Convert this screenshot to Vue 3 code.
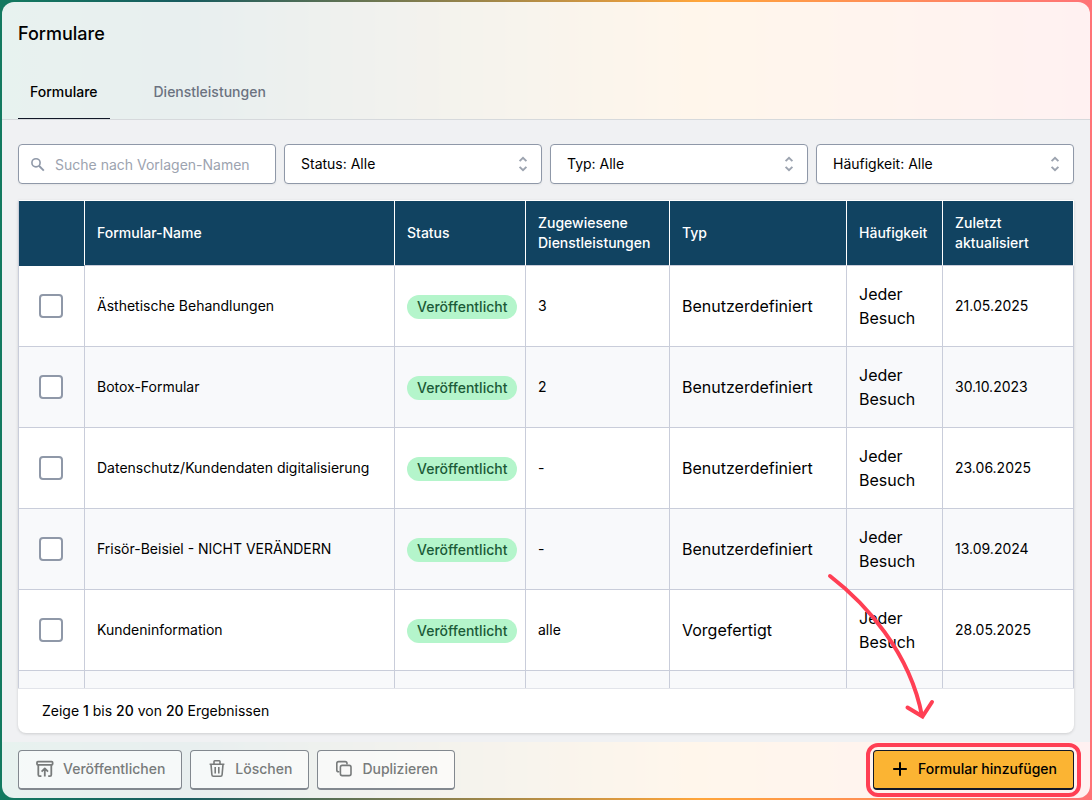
<script setup>
import { ref } from 'vue'

const search = ref('')
const filters = [
  { id: 'status', label: 'Status', text: 'Status: Alle' },
  { id: 'type', label: 'Typ', text: 'Typ: Alle' },
  { id: 'frequency', label: 'Häufigkeit', text: 'Häufigkeit: Alle' }
]
const rows = ref([
  { name: 'Ästhetische Behandlungen', services: '3', type: 'Benutzerdefiniert', updated: '21.05.2025', checked: false },
  { name: 'Botox-Formular', services: '2', type: 'Benutzerdefiniert', updated: '30.10.2023', checked: false },
  { name: 'Datenschutz/Kundendaten digitalisierung', services: '-', type: 'Benutzerdefiniert', updated: '23.06.2025', checked: false },
  { name: 'Frisör-Beisiel - NICHT VERÄNDERN', services: '-', type: 'Benutzerdefiniert', updated: '13.09.2024', checked: false },
  { name: 'Kundeninformation', services: 'alle', type: 'Vorgefertigt', updated: '28.05.2025', checked: false }
])
</script>

<template>
  <div class="shell">
    <main class="panel">
      <header class="head">
        <h1>Formulare</h1>
        <nav class="tabs">
          <a href="#formulare" class="tab active">Formulare</a>
          <a href="#dienstleistungen" class="tab">Dienstleistungen</a>
        </nav>
      </header>

      <section class="content">
        <div class="filters">
          <label class="field">
            <svg class="search-icon" viewBox="0 0 16 16" width="16" height="16" aria-hidden="true">
              <circle cx="6" cy="5.8" r="4.1" fill="none" stroke="currentColor" stroke-width="1.6" />
              <path d="M9.2 9 13.8 13.6" fill="none" stroke="currentColor" stroke-width="1.9" />
            </svg>
            <input v-model="search" type="text" placeholder="Suche nach Vorlagen-Namen" aria-label="Suche nach Vorlagen-Namen" />
          </label>
          <div v-for="f in filters" :key="f.id" class="field">
            <select :id="f.id" :aria-label="f.label">
              <option>{{ f.text }}</option>
            </select>
            <svg class="chevrons" viewBox="0 0 10 16" width="10" height="16" aria-hidden="true">
              <path d="M1.6 5.2 5 1.8 8.4 5.2M1.6 10.8 5 14.2 8.4 10.8" fill="none" stroke="currentColor" stroke-width="1.9" />
            </svg>
          </div>
        </div>

        <div class="card">
          <div class="scroller">
            <table>
              <colgroup>
                <col class="c-check" /><col /><col class="c-status" /><col class="c-services" />
                <col class="c-type" /><col class="c-freq" /><col class="c-date" />
              </colgroup>
              <thead>
                <tr>
                  <th></th>
                  <th>Formular-Name</th>
                  <th>Status</th>
                  <th>Zugewiesene Dienstleistungen</th>
                  <th>Typ</th>
                  <th>Häufigkeit</th>
                  <th>Zuletzt aktualisiert</th>
                </tr>
              </thead>
              <tbody>
                <tr v-for="row in rows" :key="row.name">
                  <td class="check"><input v-model="row.checked" type="checkbox" :aria-label="row.name" /></td>
                  <td>{{ row.name }}</td>
                  <td><span class="badge">Veröffentlicht</span></td>
                  <td>{{ row.services }}</td>
                  <td class="large">{{ row.type }}</td>
                  <td class="large">Jeder Besuch</td>
                  <td>{{ row.updated }}</td>
                </tr>
                <tr><td v-for="n in 7" :key="n"></td></tr>
              </tbody>
            </table>
          </div>
          <p class="summary">Zeige <b>1</b> bis <b>20</b> von <b>20</b> Ergebnissen</p>
        </div>
      </section>

      <footer class="actions">
        <button type="button" class="btn" disabled>
          <svg viewBox="0 0 20 20" width="20" height="20" aria-hidden="true" fill="none" stroke="currentColor" stroke-width="1.8" stroke-linejoin="round">
            <rect x="2" y="2.6" width="15.6" height="3.2" rx="0.8" />
            <path d="M3.3 6V15.8Q3.3 17.2 4.7 17.2H6.4M16.3 6V15.8Q16.3 17.2 14.9 17.2H13.2M9.8 17.6V10.2M6.6 12.6 9.8 9.4 13 12.6" />
          </svg>
          Veröffentlichen
        </button>
        <button type="button" class="btn" disabled>
          <svg viewBox="0 0 20 20" width="20" height="20" aria-hidden="true" fill="none" stroke="currentColor" stroke-width="1.6" stroke-linejoin="round">
            <path d="M2.6 5.2H17.4M7 5V2.5Q7 1.8 7.7 1.8H12.3Q13 1.8 13 2.5V5M4 5.4 4.9 15.7Q5 17.2 6.4 17.2H13.6Q15 17.2 15.1 15.7L16 5.4M8.2 8V14.4M11.8 8V14.4" />
          </svg>
          Löschen
        </button>
        <button type="button" class="btn" disabled>
          <svg viewBox="0 0 20 20" width="20" height="20" aria-hidden="true" fill="none" stroke="currentColor" stroke-width="1.6" stroke-linejoin="round">
            <rect x="6.4" y="6.4" width="10.6" height="10.2" rx="1.8" />
            <path d="M5.4 12.8H4.6Q2.8 12.8 2.8 11V4.4Q2.8 2.6 4.6 2.6H11.2Q13 2.6 13 4.4V5.4" />
          </svg>
          Duplizieren
        </button>
        <div class="primary-wrap">
          <button type="button" class="btn primary">
            <svg viewBox="0 0 20 20" width="20" height="20" aria-hidden="true">
              <path d="M10 3.2V16.8M3.2 10H16.8" fill="none" stroke="currentColor" stroke-width="2" />
            </svg>
            Formular hinzufügen
          </button>
          <span class="highlight"></span>
          <svg class="arrow" viewBox="0 0 110 150" width="110" height="150" aria-hidden="true">
            <path d="M5 4C40 31 85 80 97 144M82.500 135.500 97.500 144.500 107 130" fill="none" stroke="#ff3f54" stroke-width="4" stroke-linecap="round" />
          </svg>
        </div>
      </footer>
    </main>
  </div>
</template>

<style>
body {
  margin: 0;
}
</style>

<style scoped>
* {
  box-sizing: border-box;
}
.shell {
  height: 100vh;
  padding: 2px;
  background: linear-gradient(90deg, #137a60 0%, #175b5f 17%, #ffa53a 64%, #ff7377 100%);
  font-family: Inter, "Liberation Sans", sans-serif;
  font-size: 14px;
  line-height: 20px;
  color: #000;
}
.panel {
  height: 100%;
  display: flex;
  flex-direction: column;
  overflow: hidden;
  border-radius: 12px;
  background: rgba(255, 255, 255, 0.9);
}
.head {
  padding: 18px 16px 0;
  border-bottom: 1px solid #d6d9dc;
}
h1 {
  margin: 0 0 34px;
  font-size: 18px;
  line-height: 28px;
  font-weight: 500;
}
.tabs {
  display: flex;
  gap: 32px;
}
.tab {
  padding: 0 12px 16px;
  border-bottom: 1px solid transparent;
  color: #6b7280;
  font-weight: 500;
  text-decoration: none;
}
.tab.active {
  color: #000;
  border-color: #111827;
}
.content {
  flex: 1;
  min-height: 0;
  display: flex;
  flex-direction: column;
  gap: 16px;
  padding: 24px 16px 9px;
  background: #f0f1f3;
}
.filters {
  display: grid;
  grid-template-columns: repeat(4, 1fr);
  gap: 8px;
}
.field {
  position: relative;
  display: block;
  height: 40px;
}
.field input,
.field select {
  display: block;
  width: 100%;
  height: 100%;
  margin: 0;
  padding: 0 16px;
  appearance: none;
  border: 1px solid #8f98a8;
  border-radius: 4px;
  background: #fff;
  color: #000;
  font: inherit;
  box-shadow: 0 1px 2px rgba(0, 0, 0, 0.05);
}
.field input {
  padding: 0 12px 0 36px;
}
.field input::placeholder {
  color: #9ca3af;
}
.search-icon {
  position: absolute;
  left: 12px;
  top: 13px;
  color: #8f98a8;
}
.chevrons {
  position: absolute;
  right: 14px;
  top: 12px;
  color: #9ca3af;
}
.card {
  flex: 1;
  min-height: 0;
  display: flex;
  flex-direction: column;
  overflow: hidden;
  border-radius: 0 0 8px 8px;
  background: #fff;
  box-shadow: 0 1px 3px rgba(0, 0, 0, 0.15);
}
.scroller {
  flex: 1;
  min-height: 0;
  overflow: hidden;
}
table {
  width: 100%;
  table-layout: fixed;
  border-collapse: separate;
  border-spacing: 0;
  border-top: 1px solid #fff;
  border-left: 1px solid #c9cdda;
}
.c-check { width: 66px; }
.c-status { width: 131px; }
.c-services { width: 144px; }
.c-type { width: 177px; }
.c-freq { width: 96px; }
.c-date { width: 131px; }
th,
td {
  text-align: left;
  vertical-align: middle;
  border-right: 1px solid #c9cdda;
  border-bottom: 1px solid #c9cdda;
}
th {
  padding: 12px;
  background: #114361;
  color: #fff;
  font-weight: 500;
  border-right-color: #fff;
}
th:first-child {
  border-bottom-color: #114361;
}
td {
  height: 81px;
  padding: 16px 12px;
}
tbody tr:nth-child(even) {
  background: #f8f9fb;
}
.check input {
  display: block;
  width: 24px;
  height: 24px;
  margin: 0 8px;
  appearance: none;
  border: 2px solid #8f98a8;
  border-radius: 4px;
  background: #fff;
}
.check input:checked {
  background: #114361;
}
.large {
  font-size: 16px;
  line-height: 24px;
}
.badge {
  display: inline-block;
  margin-top: 2px;
  padding: 2px 10px;
  border-radius: 12px;
  background: #b4f5cb;
  color: #1b5a37;
  font-weight: 500;
  vertical-align: middle;
}
.summary {
  margin: 0;
  padding: 12px 24px;
  border-top: 1px solid #e2e4ea;
}
.summary b {
  font-weight: 500;
}
.actions {
  display: flex;
  gap: 8px;
  padding: 8px 16px;
}
.btn {
  display: flex;
  align-items: center;
  gap: 8px;
  height: 40px;
  padding: 0 16px 1px;
  border: 1px solid #82888f;
  border-bottom-width: 2px;
  border-radius: 4px;
  background: rgba(255, 255, 255, 0.6);
  color: #787b7b;
  font: inherit;
  font-weight: 500;
  white-space: nowrap;
}
.primary-wrap {
  position: relative;
  margin-left: auto;
}
.primary {
  border-color: #111827;
  background: #fbb433;
  color: #000;
}
.highlight {
  position: absolute;
  inset: -7px;
  border: 4px solid #ff3f54;
  border-radius: 12px;
  pointer-events: none;
}
.arrow {
  position: absolute;
  right: 139px;
  bottom: 68px;
  pointer-events: none;
}
</style>
